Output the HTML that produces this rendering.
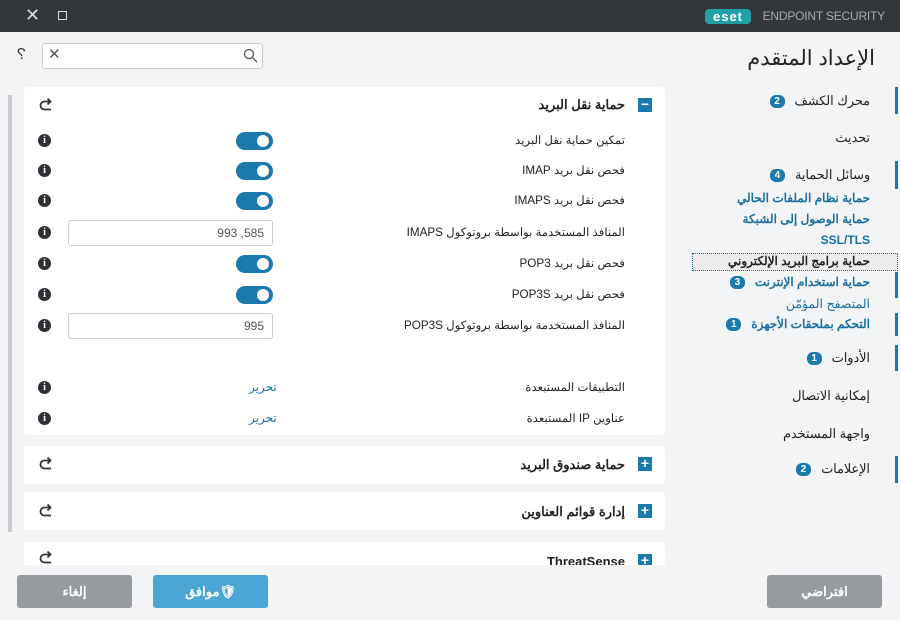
<!DOCTYPE html>
<html><head><meta charset="utf-8"><style>
*{margin:0;padding:0;box-sizing:border-box}
body{width:900px;height:620px;overflow:hidden;background:#f3f4f6;font-family:"Liberation Sans","Noto Sans CJK SC",sans-serif;position:relative;color:#222}
.a{position:absolute}
.r{direction:rtl;white-space:nowrap}
.nav{right:30px;font-size:12.8px;color:#222}
.sub{right:30px;font-size:12px;font-weight:bold;color:#1a6fa0}
.bar{position:absolute;right:2px;width:3px;background:#1a7aad}
.badge{display:inline-block;width:15px;height:13px;border-radius:6px;background:#1a7aad;color:#fff;font-size:10px;text-align:center;line-height:13px;margin-right:10px;vertical-align:1px;font-weight:bold}
.panel{position:absolute;left:24px;width:641px;background:#fff;border-radius:4px}
.lbl{right:40px;font-size:11.7px;color:#222}
.info{position:absolute;left:38px;width:13px;height:13px;border-radius:50%;background:#2d3136;color:#fff;font:bold 10px "Liberation Serif",serif;text-align:center;line-height:13px}
.tog{position:absolute;left:212px;width:37px;height:18px;border-radius:9px;background:#1a7aad}
.tog:after{content:"";position:absolute;right:4px;top:3px;width:12px;height:12px;border-radius:50%;background:#fff}
.inp{position:absolute;left:44px;width:205px;height:26px;border:1px solid #ccc;border-radius:3px;font-size:12px;color:#555;text-align:right;padding:5px 8px}
.plus{position:absolute;right:13px;width:14px;height:14px;background:#1a7aad;color:#fff;font:bold 14px/13px "Liberation Sans",sans-serif;text-align:center}
.redo{position:absolute;left:14px}
.btn{position:absolute;top:575px;height:33px;width:115px;border-radius:3px;color:#fff;font-size:13px;font-weight:bold;text-align:center;line-height:33px;direction:rtl}
</style></head><body>
<svg width="0" height="0" style="position:absolute"><defs><g id="rd"><path d="M12 4.5H6.5a4 4 0 0 0 0 8H13" fill="none" stroke="#333" stroke-width="1.8"/><path d="M9.5 1.5L12.5 4.5L9.5 7.5" fill="none" stroke="#333" stroke-width="1.8"/></g></defs></svg>
<div class="a" style="left:0;top:0;width:900px;height:32px;background:#33363b"></div>
<div class="a" style="left:25px;top:5px;color:#ddd;font-size:18px">✕</div>
<div class="a" style="left:58px;top:11px;width:9px;height:9px;border:1.5px solid #ddd"></div>
<div class="a" style="left:705px;top:9px;width:46px;height:15px;background:#22a0a8;border-radius:4px;color:#fff;font:bold 13px/15px 'Liberation Sans',sans-serif;text-align:center;letter-spacing:1px">eset</div>
<div class="a" style="left:760px;top:9px;width:125px;color:#a9acb0;font-size:12px;white-space:nowrap;letter-spacing:-0.2px;text-align:right">ENDPOINT SECURITY</div>

<div class="a r" style="right:25px;top:46px;font-size:21px;color:#222">الإعداد المتقدم</div>
<div class="a" style="left:17px;top:46px;font-size:16px;color:#333;transform:scaleX(-1)">?</div>
<div class="a" style="left:42px;top:43px;width:221px;height:26px;background:#fff;border:1px solid #ccc;border-radius:3px"></div>
<div class="a" style="left:48px;top:45px;font-size:15px;color:#555">✕</div>
<svg class="a" style="left:243px;top:48px" width="15" height="15"><circle cx="6" cy="6" r="4.5" fill="none" stroke="#555" stroke-width="1.3"/><line x1="9.5" y1="9.5" x2="14" y2="14" stroke="#555" stroke-width="1.3"/></svg>

<div class="bar" style="top:87px;height:27px"></div>
<div class="bar" style="top:161px;height:28px"></div>
<div class="bar" style="top:272px;height:26px"></div>
<div class="bar" style="top:313px;height:23px"></div>
<div class="bar" style="top:345px;height:26px"></div>
<div class="bar" style="top:456px;height:27px"></div>
<div class="a" style="left:692px;top:253px;width:206px;height:18px;border:1px dotted #1a6fa0;background:#ececee"></div>
<div class="a r nav" style="top:93px">محرك الكشف<span class="badge">2</span></div>
<div class="a r nav" style="top:130px">تحديث</div>
<div class="a r nav" style="top:167px">وسائل الحماية<span class="badge">4</span></div>
<div class="a r sub" style="top:191px">حماية نظام الملفات الحالي</div>
<div class="a r sub" style="top:212px">حماية الوصول إلى الشبكة</div>
<div class="a r sub" style="top:233px">SSL/TLS</div>
<div class="a r sub" style="top:254px;color:#222">حماية برامج البريد الإلكتروني</div>
<div class="a r sub" style="top:275px">حماية استخدام الإنترنت<span class="badge">3</span></div>
<div class="a r sub" style="top:296px;font-weight:normal;font-size:12.5px">المتصفح المؤمّن</div>
<div class="a r sub" style="top:317px">التحكم بملحقات الأجهزة<span class="badge">1</span></div>
<div class="a r nav" style="top:350px">الأدوات<span class="badge">1</span></div>
<div class="a r nav" style="top:388px">إمكانية الاتصال</div>
<div class="a r nav" style="top:426px">واجهة المستخدم</div>
<div class="a r nav" style="top:461px">الإعلامات<span class="badge">2</span></div>

<div class="a" style="left:8px;top:95px;width:4px;height:437px;background:#c9cbce"></div>

<div style="position:absolute;left:0;top:0;width:680px;height:565px;overflow:hidden">
<div class="panel" style="top:87px;height:348px">
  <svg class="redo" style="top:10px" width="16" height="15"><use href="#rd"/></svg>
  <div class="plus" style="top:11px">−</div>
  <div class="a r" style="right:40px;top:10px;font-size:13px;font-weight:bold">حماية نقل البريد</div>
  <div class="a r lbl" style="top:46px">تمكين حماية نقل البريد</div>
  <div class="a r lbl" style="top:76px">فحص نقل بريد IMAP</div>
  <div class="a r lbl" style="top:106px">فحص نقل بريد IMAPS</div>
  <div class="a r lbl" style="top:138px">المنافذ المستخدمة بواسطة بروتوكول IMAPS</div>
  <div class="a r lbl" style="top:169px">فحص نقل بريد POP3</div>
  <div class="a r lbl" style="top:200px">فحص نقل بريد POP3S</div>
  <div class="a r lbl" style="top:231px">المنافذ المستخدمة بواسطة بروتوكول POP3S</div>
  <div class="a r lbl" style="top:293px">التطبيقات المستبعدة</div>
  <div class="a r lbl" style="top:324px">عناوين IP المستبعدة</div>
  <div class="info" style="top:47px;left:14px">i</div>
  <div class="info" style="top:77px;left:14px">i</div>
  <div class="info" style="top:107px;left:14px">i</div>
  <div class="info" style="top:139px;left:14px">i</div>
  <div class="info" style="top:170px;left:14px">i</div>
  <div class="info" style="top:201px;left:14px">i</div>
  <div class="info" style="top:232px;left:14px">i</div>
  <div class="info" style="top:294px;left:14px">i</div>
  <div class="info" style="top:325px;left:14px">i</div>
  <div class="tog" style="top:45px"></div>
  <div class="tog" style="top:75px"></div>
  <div class="tog" style="top:105px"></div>
  <div class="inp" style="top:133px">993 ,585</div>
  <div class="tog" style="top:168px"></div>
  <div class="tog" style="top:199px"></div>
  <div class="inp" style="top:226px">995</div>
  <div class="a r" style="left:225px;top:293px;font-size:12px;color:#1a6fa0">تحرير</div>
  <div class="a r" style="left:225px;top:324px;font-size:12px;color:#1a6fa0">تحرير</div>
</div>
<div class="panel" style="top:446px;height:38px">
  <svg class="redo" style="top:10px" width="16" height="15"><use href="#rd"/></svg><div class="plus" style="top:11px">+</div>
  <div class="a r" style="right:40px;top:11px;font-size:13px;font-weight:bold">حماية صندوق البريد</div>
</div>
<div class="panel" style="top:492px;height:38px">
  <svg class="redo" style="top:11px" width="16" height="15"><use href="#rd"/></svg><div class="plus" style="top:12px">+</div>
  <div class="a r" style="right:40px;top:12px;font-size:13px;font-weight:bold">إدارة قوائم العناوين</div>
</div>
<div class="panel" style="top:542px;height:38px">
  <svg class="redo" style="top:8px" width="16" height="15"><use href="#rd"/></svg><div class="plus" style="top:12px">+</div>
  <div class="a" style="right:40px;top:12px;font-size:13px;font-weight:bold">ThreatSense</div>
</div>
</div>

<div class="btn" style="left:17px;background:#979ba0">إلغاء</div>
<div class="btn" style="left:153px;background:#4ba6d6">🛡موافق</div>
<div class="btn" style="left:767px;background:#979ba0">افتراضي</div>
</body></html>
